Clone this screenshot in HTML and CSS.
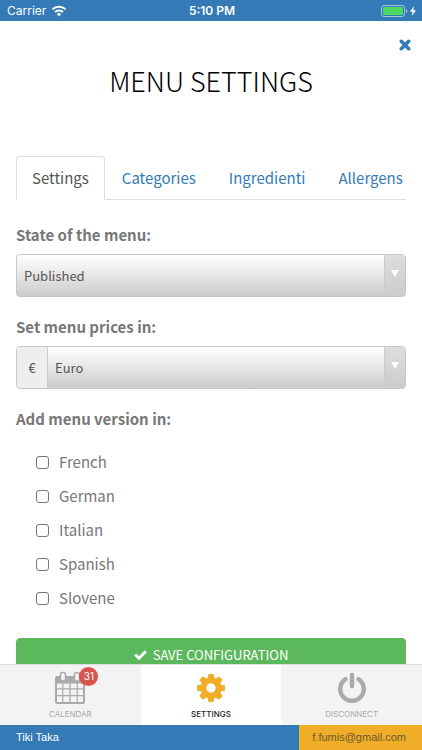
FILE: index.html
```html
<!DOCTYPE html>
<html lang="en">
<head>
<meta charset="utf-8">
<meta name="viewport" content="width=device-width, initial-scale=1">
<title>Menu settings</title>
<link rel="stylesheet" href="styles.css">
</head>
<body>
<header class="status">
  <div class="status-left">
    <span>Carrier</span>
    <svg width="16" height="12" viewBox="0 0 16 12" fill="none" stroke="#fff" stroke-width="2" aria-hidden="true">
      <path d="M1.5 4.3a9.3 9.3 0 0 1 13 0M4 7a5.8 5.8 0 0 1 8 0"/>
      <path d="M8 11.5 5.7 9.1a3.3 3.3 0 0 1 4.6 0z" fill="#fff" stroke="none"/>
    </svg>
  </div>
  <span class="status-time">5:10 PM</span>
  <div class="status-right">
    <svg width="36" height="12" viewBox="0 0 36 12" aria-hidden="true">
      <rect x=".5" y=".5" width="23" height="11" rx="2.5" fill="none" stroke="#a3c3df"/>
      <rect x="2" y="2" width="20" height="8" rx="1.2" fill="#4cd964"/>
      <path d="M25 4q1.5.5 1.5 2T25 8z" fill="#a3c3df"/>
      <path d="M33 1 29 6.7h2.6L30.8 11l4.2-5.800h-2.700z" fill="#fff"/>
    </svg>
  </div>
</header>

<main class="page">
  <div class="close-row">
    <button class="close" type="button" aria-label="Close">
      <svg width="12" height="12" viewBox="0 0 12 12" stroke="#337ab7" stroke-width="3.6" stroke-linecap="round" aria-hidden="true"><path d="M2.300 2.300 9.700 9.700M9.700 2.300 2.300 9.700"/></svg>
    </button>
  </div>
  <h1 class="title">MENU SETTINGS</h1>

  <nav class="tabs">
    <a class="tab tab-active" href="#settings">Settings</a>
    <a class="tab" href="#categories">Categories</a>
    <a class="tab" href="#ingredients">Ingredienti</a>
    <a class="tab" href="#allergens">Allergens</a>
  </nav>

  <form class="form" id="settings">
    <div class="field">
      <label class="label" for="state">State of the menu:</label>
      <div class="control">
        <select class="select" id="state"><option>Published</option></select>
        <span class="arrow"></span>
      </div>
    </div>
    <div class="field">
      <label class="label" for="currency">Set menu prices in:</label>
      <div class="control">
        <span class="addon">€</span>
        <select class="select" id="currency"><option>Euro</option></select>
        <span class="arrow"></span>
      </div>
    </div>
    <fieldset class="languages">
      <legend class="label">Add menu version in:</legend>
      <label class="check"><input type="checkbox">French</label>
      <label class="check"><input type="checkbox">German</label>
      <label class="check"><input type="checkbox">Italian</label>
      <label class="check"><input type="checkbox">Spanish</label>
      <label class="check"><input type="checkbox">Slovene</label>
    </fieldset>
    <button class="save" type="submit">
      <svg width="13" height="10" viewBox="0 0 13 10" fill="none" stroke="#fff" stroke-width="3" aria-hidden="true"><path d="M1.200 4.500 5 8.200 11.800 1.300"/></svg>
      SAVE CONFIGURATION
    </button>
  </form>
</main>

<nav class="dock">
  <a class="dock-item" href="#calendar">
    <span class="dock-icon">
      <svg width="32" height="34" viewBox="0 0 32 34" aria-hidden="true">
        <path fill="#aaa" fill-rule="evenodd" d="M3 5h26q2 0 2 2v24q0 2-2 2H3q-2 0-2-2V7q0-2 2-2zM3 12.500v4.800h5.200v-4.800zM9.400 12.500v4.800h6v-4.800zM16.600 12.500v4.800h6v-4.800zM23.800 12.500v4.800H29v-4.800zM3 18.500v5.500h5.200v-5.500zM9.400 18.500v5.500h6v-5.500zM16.600 18.500v5.500h6v-5.500zM23.800 18.500v5.500H29v-5.500zM3 25.200V31h5.200v-5.800zM9.400 25.200V31h6v-5.800zM16.600 25.200V31h6v-5.800zM23.800 25.200V31H29v-5.800z"/>
        <rect x="6.500" y="1.500" width="5" height="8.500" rx="2" fill="#f3f3f3" stroke="#aaa" stroke-width="1.500"/>
        <rect x="20.500" y="1.500" width="5" height="8.500" rx="2" fill="#f3f3f3" stroke="#aaa" stroke-width="1.500"/>
      </svg>
      <span class="badge">31</span>
    </span>
    <span>CALENDAR</span>
  </a>
  <a class="dock-item dock-active" href="#settings">
    <span class="dock-icon">
      <svg width="28" height="28" viewBox="0 0 1536 1536" aria-hidden="true">
        <path fill="#f0ad28" d="M1024 768q0-106-75-181t-181-75-181 75-75 181 75 181 181 75 181-75 75-181zm512-109v222q0 12-8 23t-20 13l-185 28q-19 54-39 91 35 50 107 138 10 12 10 25t-9 23q-27 37-99 108t-94 71q-12 0-26-9l-138-108q-44 23-91 38-16 136-29 186-7 28-36 28H657q-14 0-24.500-8.500T621 1506l-28-184q-49-16-90-37l-141 107q-10 9-25 9-14 0-25-11-126-114-165-168-7-10-7-23 0-12 8-23 15-21 51-66.500t54-70.500q-27-50-41-99L29 913q-13-2-21-12.500T0 877V655q0-12 8-23t19-13l186-28q14-46 39-92-40-57-107-138-10-12-10-24 0-10 9-23 26-36 98.500-107.500T337 135q13 0 26 10l138 107q44-23 91-38 16-136 29-186 7-28 36-28h222q14 0 24.500 8.500T915 30l28 184q49 16 90 37l142-107q9-9 24-9 13 0 25 10 129 119 165 170 7 8 7 22 0 12-8 23-15 21-51 66.500t-54 70.500q26 50 41 98l183 28q13 2 21 12.500t8 23.500z"/>
      </svg>
    </span>
    <span>SETTINGS</span>
  </a>
  <a class="dock-item" href="#disconnect">
    <span class="dock-icon">
      <svg width="28" height="32" viewBox="0 0 28 32" fill="none" stroke="#aaa" stroke-linecap="round" aria-hidden="true">
        <path d="M7.500 7.200a11.800 11.800 0 1 0 13 0" stroke-width="4.400"/><path d="M14 3v11" stroke-width="4.400"/>
      </svg>
    </span>
    <span>DISCONNECT</span>
  </a>
</nav>

<footer class="account">
  <span class="venue">Tiki Taka</span>
  <a class="email" href="mailto:f.fumis@gmail.com">f.fumis@gmail.com</a>
</footer>
</body>
</html>
```
FILE: styles.css
```css
* { box-sizing: border-box; }

body {
  margin: 0;
  height: 100vh;
  display: flex;
  flex-direction: column;
  background: #fff;
  color: #777;
  font-family: "Noto Sans CJK SC", "Noto Sans", sans-serif;
  font-size: 15px;
  line-height: 20px;
}

a { text-decoration: none; }
svg { display: block; }

.status {
  flex: none;
  display: grid;
  grid-template-columns: 1fr auto 1fr;
  align-items: center;
  height: 21px;
  padding: 0 5px 0 7px;
  background: #337ab7;
  color: #fff;
  font-family: Inter, sans-serif;
  font-size: 12px;
}
.status-left { display: flex; align-items: center; gap: 5px; }
.status-time { font-weight: 600; }
.status-right { display: flex; justify-content: flex-end; }

.page {
  flex: 1;
  min-height: 0;
  overflow: hidden auto;
  scrollbar-width: none;
  padding: 16px 16px 24px;
}

.close-row {
  display: flex;
  justify-content: flex-end;
  margin-right: -5px;
}
.close {
  padding: 2px 0 2px 8px;
  border: 0;
  background: none;
}

.title {
  margin: 6px 0 53px;
  color: #000;
  font-size: 27px;
  font-weight: 200;
  line-height: 44px;
  text-align: center;
}

.tabs {
  display: flex;
  border-bottom: 1px solid #ddd;
}
.tab {
  flex: none;
  margin: 0 1px -1px 0;
  padding: 10px 15px 11px;
  border: 1px solid transparent;
  border-radius: 4px 4px 0 0;
  color: #337ab7;
  line-height: 21px;
}
.tab-active {
  border-color: #ddd;
  border-bottom-color: #fff;
  color: #555;
}

.form { padding-top: 25px; }
.field { margin-bottom: 20px; }
.label {
  display: block;
  margin: 0 0 9px;
  padding: 0;
  font-weight: 700;
}

.control {
  display: flex;
  height: 43px;
  border: 1px solid #c8c8c8;
  border-radius: 4px;
  overflow: hidden;
  background: linear-gradient(#fff, #ccc);
}
.addon {
  display: flex;
  align-items: center;
  justify-content: center;
  width: 31px;
  border-right: 1px solid #ccc;
  background: #eee;
  color: #555;
  font-size: 13px;
}
.select {
  flex: 1;
  min-width: 0;
  padding: 0 7px;
  border: 0;
  appearance: none;
  background: none;
  color: #555;
  font: inherit;
  font-size: 13px;
}
.arrow {
  display: flex;
  justify-content: center;
  width: 21px;
  padding-top: 15px;
  border-left: 1px solid #ccc;
  background: linear-gradient(#ddd, #ccc);
}
.arrow::before {
  content: "";
  width: 8px;
  height: 7px;
  background: #fff;
  clip-path: polygon(0 0, 100% 0, 50% 100%);
}

.languages {
  margin: 0;
  padding: 0;
  border: 0;
}
.languages .label { margin-bottom: 21px; }
.check {
  display: flex;
  align-items: center;
  gap: 10px;
  width: max-content;
  margin: 0 0 10px 20px;
  line-height: 24px;
}
.check input {
  appearance: none;
  width: 13px;
  height: 13px;
  margin: 0;
  border: 1px solid #777;
  border-radius: 3px;
}

.save {
  display: flex;
  align-items: center;
  justify-content: center;
  gap: 6px;
  width: 100%;
  height: 34px;
  margin-top: 18px;
  border: 1px solid #5cb85c;
  border-radius: 4px;
  background: #5cb85c;
  color: #fff;
  font: inherit;
  font-size: 13px;
}

.dock {
  flex: none;
  display: grid;
  grid-template-columns: repeat(3, 1fr);
  border-top: 1px solid #ddd;
}
.dock-item {
  display: flex;
  flex-direction: column;
  align-items: center;
  height: 60px;
  padding-top: 5px;
  background: #f3f3f3;
  color: #aaa;
  font-family: Inter, sans-serif;
  font-size: 8px;
  line-height: 16px;
}
.dock-active { background: #fff; color: #222; font-weight: 500; }
.dock-icon {
  position: relative;
  display: flex;
  align-items: center;
  height: 36px;
}
.badge {
  position: absolute;
  top: -3px;
  right: -12px;
  width: 19px;
  height: 19px;
  border-radius: 50%;
  background: #d9534f;
  color: #fff;
  font-size: 10px;
  line-height: 19px;
  text-align: center;
}

.account {
  flex: none;
  display: flex;
  background: #337ab7;
  font-family: "Liberation Sans", sans-serif;
  font-size: 11px;
  line-height: 25px;
}
.venue { flex: 1; padding-left: 16px; color: #fff; }
.email { padding: 0 16px 0 13px; background: #f0ad28; color: #6b5a33; }
```
